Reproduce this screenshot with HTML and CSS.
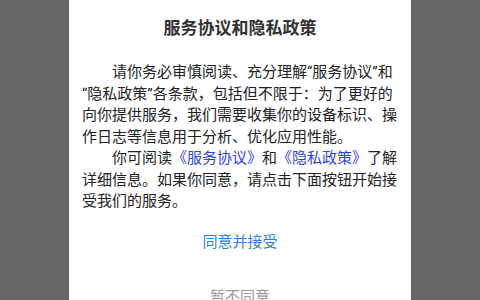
FILE: index.html
```html
<!DOCTYPE html>
<html lang="zh-CN">
<head>
    <meta charset="UTF-8">
    <meta name="viewport" content="width=device-width, initial-scale=1.0">
    <title>服务协议和隐私政策</title>
    <link rel="stylesheet" href="styles.css">
</head>
<body>

<div class="dialog">
    <h1 class="dialog-title">服务协议和隐私政策</h1>
    <div class="dialog-content">
        <p>请你务必审慎阅读、充分理解“服务协议”和“隐私政策”各条款，包括但不限于：为了更好的向你提供服务，我们需要收集你的设备标识、操作日志等信息用于分析、优化应用性能。</p>
        <p>你可阅读<a href="#">《服务协议》</a>和<a href="#">《隐私政策》</a>了解详细信息。如果你同意，请点击下面按钮开始接受我们的服务。</p>
    </div>
    <button class="btn btn-agree">同意并接受</button>
    <button class="btn btn-cancel">暂不同意</button>
</div>

</body>
</html>
```

FILE: styles.css
```css
html, body {
    height: 100%;
}
body {
    margin: 0;
    background-color: #666;
    font-family: Roboto, "Noto Sans CJK SC", sans-serif;
    overflow: hidden;
}
.dialog {
    width: 342px;
    min-height: 100%;
    margin: 0 auto;
    padding: 16px 13px 0;
    box-sizing: border-box;
    background: #fff;
}
.dialog-title {
    margin: 0;
    font-size: 17px;
    line-height: 24px;
    font-weight: bold;
    text-align: center;
    color: #333;
}
.dialog-content {
    margin-top: 22px;
    font-size: 15px;
    line-height: 21.5px;
    color: #222;
}
.dialog-content p {
    margin: 0;
    text-indent: 2em;
}
.dialog-content a {
    color: #3344dd;
    text-decoration: none;
}
.btn {
    display: block;
    width: 100%;
    height: 55px;
    padding: 0;
    border: none;
    background: none;
    font-family: inherit;
    font-size: 15px;
    cursor: pointer;
}
.btn-agree {
    color: #2b80e4;
}
.btn-cancel {
    color: #999;
}
```
